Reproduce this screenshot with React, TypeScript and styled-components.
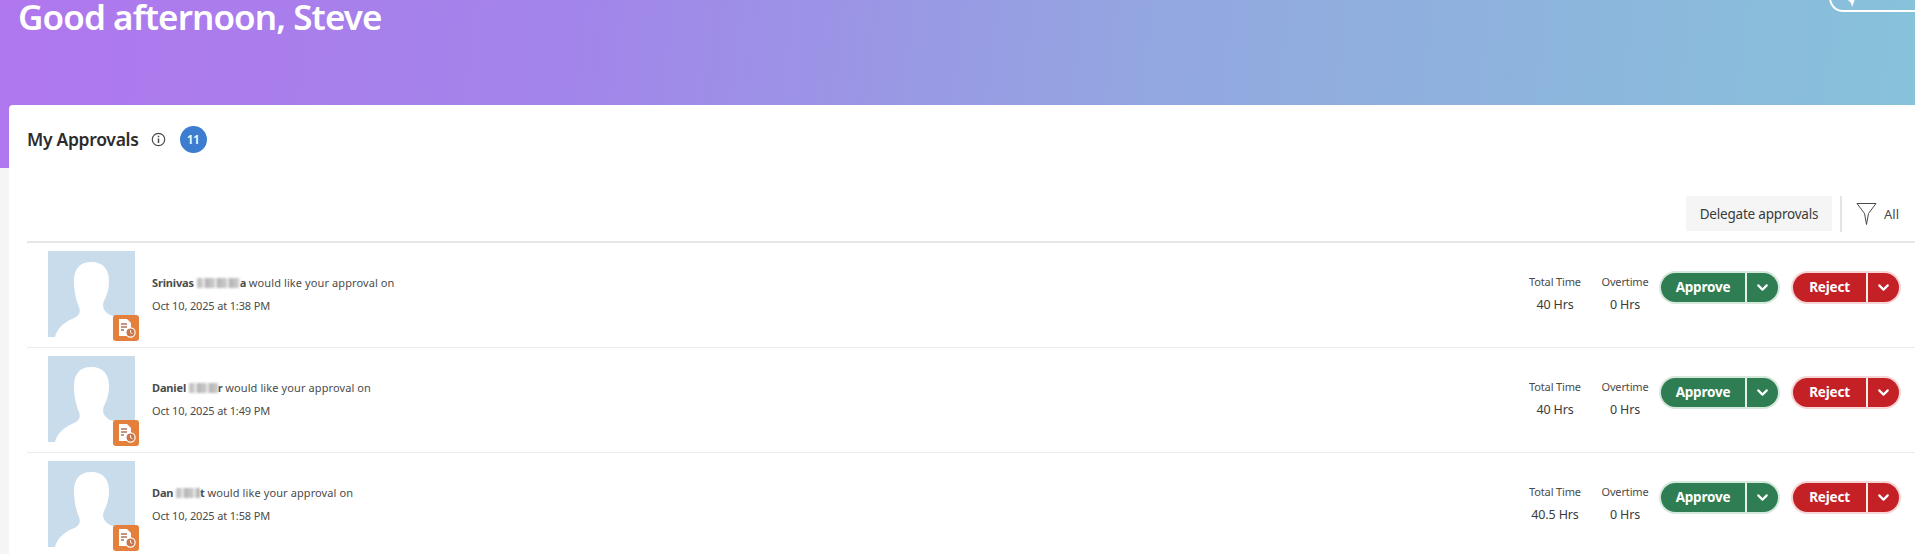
import React from 'react';
import styled, { createGlobalStyle } from 'styled-components';
import { ChevronDown } from 'lucide-react';

const GlobalStyle = createGlobalStyle`
  html, body {
    margin: 0;
    height: 554px;
    overflow: hidden;
    background: #f5f5f5;
    font-family: "Noto Sans", "Open Sans", sans-serif;
  }
`;

const Hero = styled.header`
  background: linear-gradient(97deg, #b077ee 0%, #a285ea 30%, #93a7e0 60%, #87c2da 100%);
  box-sizing: border-box;
  display: flex;
  height: 168px;
  justify-content: space-between;
  padding-left: 18px;
`;

const Greeting = styled.h1`
  color: #fff;
  font-size: 35px;
  font-weight: 600;
  letter-spacing: -0.9px;
  line-height: 33px;
  margin: 0;
`;

const HeroButton = styled.div`
  border: 2px solid #fff;
  border-radius: 14px;
  box-sizing: border-box;
  height: 42px;
  margin-right: -20px;
  margin-top: -30px;
  padding: 27px 0 0 16px;
  width: 106px;
`;

const HeroButtonIcon = styled.svg`
  display: block;
  height: 9px;
  width: 9px;
`;

const Card = styled.main`
  background: #fff;
  border-top-left-radius: 4px;
  box-sizing: border-box;
  height: 449px;
  margin-left: 9px;
  margin-top: -63px;
  overflow: hidden;
  padding-left: 18px;
`;

const TitleRow = styled.div`
  align-items: center;
  display: flex;
  height: 68px;
`;

const Title = styled.h2`
  color: #2c2c2c;
  font-size: 17.5px;
  font-weight: 600;
  letter-spacing: -0.3px;
  margin: 0 12px 0 0;
`;

const InfoIcon = styled.svg`
  height: 15px;
  margin-right: 13px;
  width: 15px;
`;

const CountBadge = styled.span`
  align-items: center;
  background: #3d7dd0;
  border-radius: 50%;
  color: #fff;
  display: flex;
  font-size: 12px;
  font-weight: 600;
  height: 27px;
  justify-content: center;
  letter-spacing: -0.5px;
  margin-left: 1px;
  width: 27px;
`;

const Toolbar = styled.div`
  align-items: center;
  display: flex;
  height: 37px;
  justify-content: flex-end;
  margin-top: 22px;
  padding-right: 16px;
  padding-bottom: 9px;
`;

const DelegateButton = styled.div`
  align-items: center;
  background: #f5f5f5;
  color: #3a3a3a;
  display: flex;
  font-size: 13.5px;
  height: 35px;
  justify-content: center;
  letter-spacing: -0.2px;
  width: 146px;
`;

const Divider = styled.div`
  background: #e3e3e3;
  height: 36px;
  margin: 0 14px 0 8px;
  width: 2px;
`;

const FunnelIcon = styled.svg`
  height: 24px;
  margin-right: 7px;
  width: 21px;
`;

const FilterLabel = styled.span`
  color: #4a4a4a;
  font-size: 13px;
`;

const List = styled.div`
  border-top: 2px solid #e6e6e6;
`;

const Row = styled.div`
  align-items: center;
  border-bottom: 1px solid #ebebeb;
  box-sizing: border-box;
  display: flex;
  height: 105px;
  padding: 0 16px 0 21px;
`;

const AvatarWrap = styled.div`
  flex: none;
  height: 86px;
  margin-right: 17px;
  margin-top: -2px;
  position: relative;
  width: 87px;
`;

const AvatarImage = styled.svg`
  display: block;
  height: 86px;
  width: 87px;
`;

const StatusBadge = styled.span`
  align-items: center;
  background: #e5803c;
  border-radius: 3px;
  bottom: -4px;
  display: flex;
  height: 26px;
  justify-content: center;
  position: absolute;
  right: -4px;
  width: 26px;
`;

const Summary = styled.div`
  color: #4b4b4b;
  flex: 1;
  font-size: 11px;
  letter-spacing: -0.15px;
  margin-top: -3px;
`;

const SummaryLine = styled.div`
  height: 23px;
  line-height: 23px;
`;

const Request = styled.span`
  letter-spacing: 0.1px;
`;

const Name = styled.b`
  font-weight: 700;
`;

const Redacted = styled.span<{ $width: number }>`
  background: repeating-linear-gradient(90deg, #c4c4c4 0 5px, #e4e4e4 5px 8px, #b8b8b8 8px 12px);
  display: inline-block;
  filter: blur(1px);
  height: 10px;
  vertical-align: -1px;
  width: ${props => props.$width}px;
`;

const Stat = styled.div`
  color: #4b4b4b;
  font-size: 11px;
  letter-spacing: -0.15px;
  margin-top: -3px;
  text-align: center;
  width: 70px;
`;

const StatValue = styled.div`
  color: #3a3a3a;
  font-size: 12.5px;
  line-height: 22px;
  margin-top: 1px;
`;

const StatLabel = styled.div`
  line-height: 22px;
`;

const SplitButton = styled.div<{ $bg: string; $ring: string; $left: number }>`
  background: ${props => props.$bg};
  border-radius: 15px;
  box-shadow: 0 0 0 2px ${props => props.$ring};
  color: #fff;
  display: flex;
  flex: none;
  height: 29px;
  margin-left: ${props => props.$left}px;
  margin-top: -16px;
  overflow: hidden;
`;

const ButtonLabel = styled.span<{ $width: number }>`
  align-items: center;
  display: flex;
  font-size: 13.5px;
  font-weight: 700;
  justify-content: center;
  letter-spacing: -0.2px;
  width: ${props => props.$width}px;
`;

const ButtonCaret = styled.span`
  align-items: center;
  border-left: 2px solid #e8f0ea;
  display: flex;
  justify-content: center;
  width: 31px;
`;

const Silhouette = () => (
  <AvatarImage viewBox="0 0 87 86">
    <rect width="87" height="86" fill="#c9dcec" />
    <path
      fill="#fff"
      d="M43 11C56 11 61 19 61 30C61 38 59 44 56 50C54 55 55 60 62 64C72 67 82 68 87 72L87 86L7 86C9 78 15 72 24 68C31 65 33 62 31 56C28 49 26 40 26 30C26 19 31 11 43 11Z"
    />
  </AvatarImage>
);

const TimesheetIcon = () => (
  <svg width="20" height="20" viewBox="0 0 20 20">
    <path fill="#fff" d="M3 1H11L15 5V18H3Z" />
    <path stroke="#b5705a" strokeWidth="1.6" d="M5 6H11M5 9H11M5 12H8" />
    <circle cx="14.5" cy="14.5" r="4.6" fill="#c9764a" stroke="#fff" strokeWidth="1.2" />
    <path stroke="#fff" strokeWidth="1" fill="none" d="M14.5 12.2V14.5L16.4 15.6" />
  </svg>
);

interface Approval {
  first: string;
  redacted: number;
  tail: string;
  date: string;
  total: string;
}

const approvals: Approval[] = [
  { first: 'Srinivas', redacted: 43, tail: 'a', date: 'Oct 10, 2025 at 1:38 PM', total: '40 Hrs' },
  { first: 'Daniel', redacted: 29, tail: 'r', date: 'Oct 10, 2025 at 1:49 PM', total: '40 Hrs' },
  { first: 'Dan', redacted: 24, tail: 't', date: 'Oct 10, 2025 at 1:58 PM', total: '40.5 Hrs' },
];

export default function App() {
  return (
    <>
      <GlobalStyle />
      <Hero>
        <Greeting>Good afternoon, Steve</Greeting>
        <HeroButton>
          <HeroButtonIcon viewBox="0 0 9 9">
            <path fill="#fff" d="M1 1L8 0L5 8L4 4Z" />
          </HeroButtonIcon>
        </HeroButton>
      </Hero>
      <Card>
        <TitleRow>
          <Title>My Approvals</Title>
          <InfoIcon viewBox="0 0 15 15">
            <circle cx="7.5" cy="7.5" r="6.2" fill="none" stroke="#4a4a4a" strokeWidth="1.2" />
            <path stroke="#4a4a4a" strokeWidth="1.5" d="M7.5 6.4V11M7.5 3.8V5.3" />
          </InfoIcon>
          <CountBadge>11</CountBadge>
        </TitleRow>
        <Toolbar>
          <DelegateButton>Delegate approvals</DelegateButton>
          <Divider />
          <FunnelIcon viewBox="0 0 21 24">
            <path fill="none" stroke="#4a4a4a" strokeWidth="1" d="M1 1.5H20L12.5 11.5L10.5 22.5L8.5 11.5Z" />
          </FunnelIcon>
          <FilterLabel>All</FilterLabel>
        </Toolbar>
        <List>
          {approvals.map(item => (
            <Row key={item.date}>
              <AvatarWrap>
                <Silhouette />
                <StatusBadge>
                  <TimesheetIcon />
                </StatusBadge>
              </AvatarWrap>
              <Summary>
                <SummaryLine>
                  <Name>
                    {item.first} <Redacted $width={item.redacted} />
                    {item.tail}
                  </Name>{' '}
                  <Request>would like your approval on</Request>
                </SummaryLine>
                <SummaryLine>{item.date}</SummaryLine>
              </Summary>
              <Stat>
                <StatLabel>Total Time</StatLabel>
                <StatValue>{item.total}</StatValue>
              </Stat>
              <Stat>
                <StatLabel>Overtime</StatLabel>
                <StatValue>0 Hrs</StatValue>
              </Stat>
              <SplitButton $bg="#2f7d52" $ring="#d5e8dc" $left={1}>
                <ButtonLabel $width={84}>Approve</ButtonLabel>
                <ButtonCaret>
                  <ChevronDown size={17} strokeWidth={3} />
                </ButtonCaret>
              </SplitButton>
              <SplitButton $bg="#c42127" $ring="#f6d5d6" $left={15}>
                <ButtonLabel $width={73}>Reject</ButtonLabel>
                <ButtonCaret>
                  <ChevronDown size={17} strokeWidth={3} />
                </ButtonCaret>
              </SplitButton>
            </Row>
          ))}
        </List>
      </Card>
    </>
  );
}
